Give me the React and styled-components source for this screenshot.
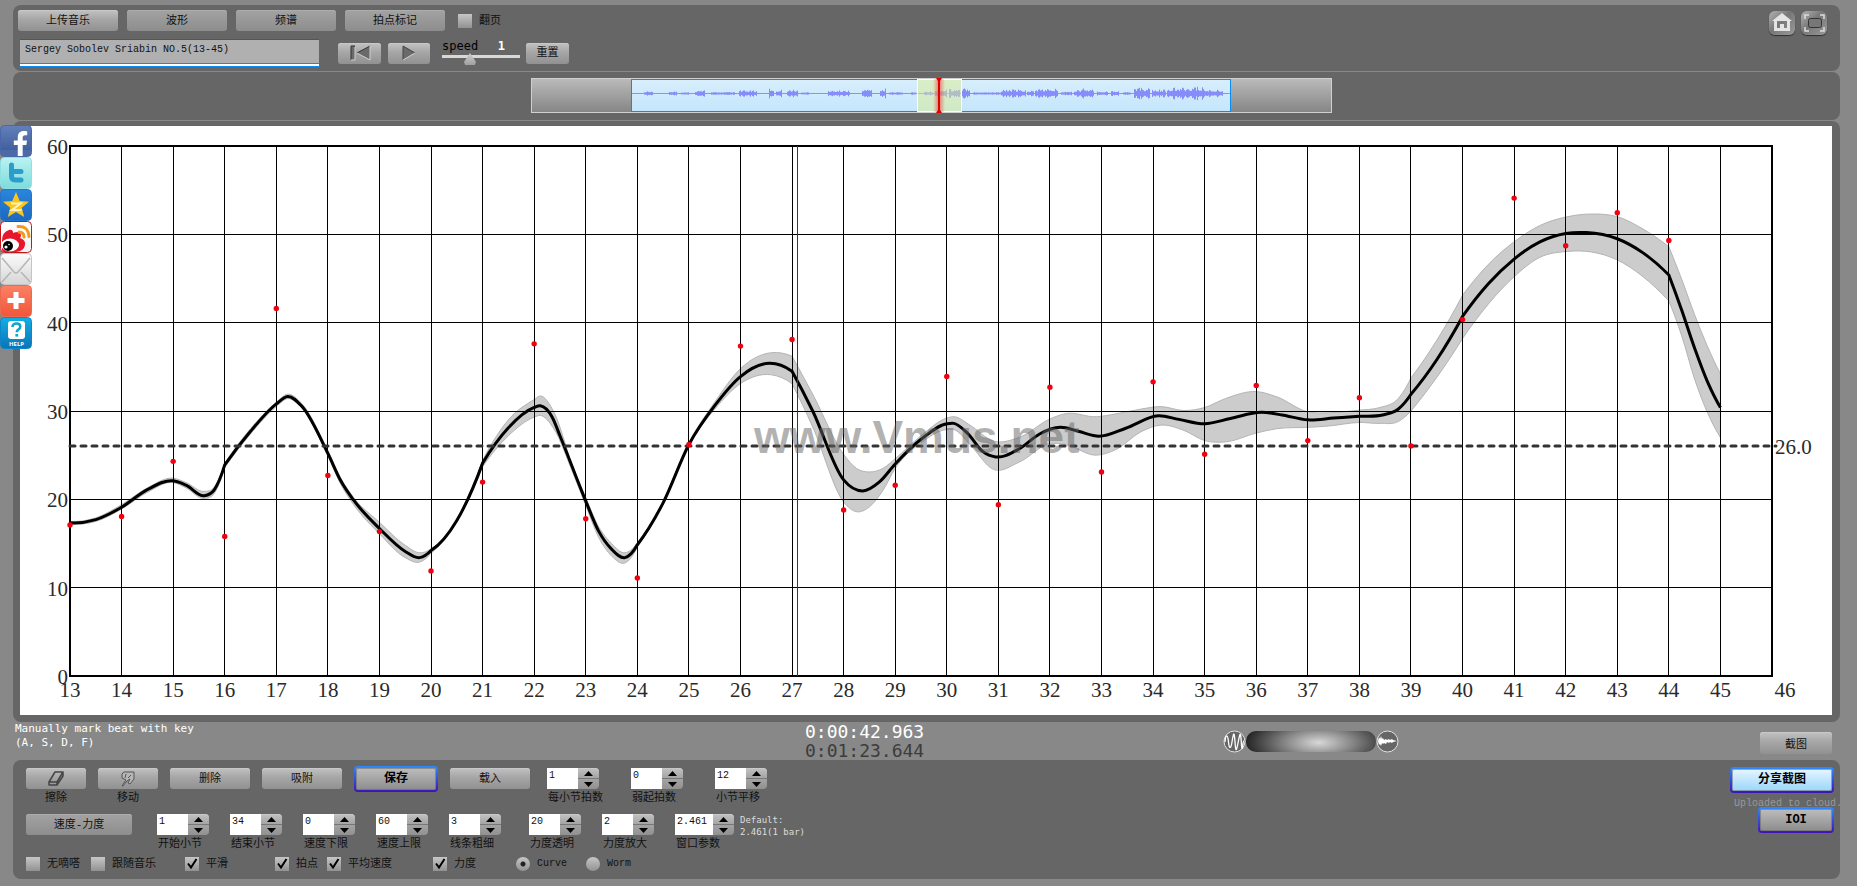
import * as React from "react"
import styled, { createGlobalStyle, css } from "styled-components"
import { FaFacebookF } from "react-icons/fa"

const GlobalStyle = createGlobalStyle`
  *, *::before, *::after {
    box-sizing: border-box;
  }
  body {
    margin: 0;
    background: #888;
    font-family: "Liberation Mono", "Noto Sans CJK SC", monospace;
    font-size: 11px;
    line-height: 14px;
    color: #111;
  }
  button, input {
    font: inherit;
    color: inherit;
    margin: 0;
  }
`

const raised = css`
  border: 0;
  border-radius: 3px;
  background: linear-gradient(#c2c2c2, #a6a6a6 45%, #919191);
  box-shadow: inset 0 1px 0 #c8c8c8;
`

const Page = styled.main`
  min-height: 100vh;
  padding: 5px 17px 7px 13px;
`
const Panel = styled.section`
  background: #666;
  border-radius: 8px;
  margin-bottom: 1px;
`
const TopPanel = styled(Panel)`
  display: flex;
  justify-content: space-between;
  padding: 5px 13px 4px 5px;
`
const WavePanel = styled(Panel)`
  display: flex;
  justify-content: center;
  padding: 6px 0 6px 10px;
  svg {
    display: block;
    width: 100%;
    max-width: 801px;
    height: 36px;
  }
`
const ChartPanel = styled(Panel)`
  padding: 5px 8px 7px 7px;
  margin-bottom: 0;
  svg {
    display: block;
    width: 100%;
    background: #fff;
  }
`
const Tabs = styled.div`
  display: flex;
  align-items: center;
  gap: 9px;
`
const Transport = styled.div`
  display: flex;
  align-items: center;
  margin: 8px 0 0 2px;
`
const Button = styled.button`
  ${raised}
  flex: none;
  width: ${(p) => p.$w}px;
  height: ${(p) => p.$h || 21}px;
  padding: 0;
  display: flex;
  align-items: center;
  justify-content: center;
  ${(p) => p.$flat && css`
    background: linear-gradient(#a3a3a3, #8d8d8d);
    box-shadow: inset 0 1px 0 #adadad;
  `}
`
const Framed = styled(Button)`
  height: 26px;
  border: 2px solid transparent;
  border-radius: 4px;
  font-weight: bold;
  color: #000;
  font-size: 12px;
  background:
    linear-gradient(${(p) => (p.$blue ? "#e6f6ff, #9ad6fb" : "#bdbdbd, #8c8c8c")}) padding-box,
    linear-gradient(#2d8bff, #3f12b8) border-box;
  box-shadow: inset 0 0 0 1px #6668;
`
const FileName = styled.input`
  width: 299px;
  height: 28px;
  margin-right: 19px;
  padding: 0 5px 8px;
  border: 0;
  border-top: 1px solid #555;
  font-size: 10px;
  background: linear-gradient(#0a8cf0 1px, #fff 1px, #fff 3px, #0a8cf0 3px) bottom / 100% 4px no-repeat #b0b0b0;
`
const Player = styled.div`
  display: flex;
  gap: 7px;
`
const Speed = styled.div`
  width: 78px;
  margin: 0 6px 0 12px;
  padding-bottom: 2px;
  font-family: "DejaVu Sans Mono", monospace;
  font-size: 12px;
  .head {
    display: flex;
    justify-content: space-between;
    padding-right: 15px;
    color: #000;
  }
  output {
    color: #fff;
    font-weight: bold;
  }
  input {
    appearance: none;
    display: block;
    width: 100%;
    height: 12px;
    background: linear-gradient(#d8d8d8, #d8d8d8) 0 2px / 100% 3px no-repeat;
  }
  input::-webkit-slider-thumb {
    appearance: none;
    width: 12px;
    height: 12px;
    background: linear-gradient(#d0d0d0, #a0a0a0);
    clip-path: polygon(50% 0, 100% 75%, 90% 100%, 10% 100%, 0 75%);
  }
`
const Corner = styled.div`
  display: flex;
  gap: 6px;
  padding-top: 1px;
  button {
    width: 26px;
    height: 24px;
    padding: 0;
    border: 0;
    border-radius: 6px;
    background: linear-gradient(135deg, #b4b4b4, #777 45%, #9a9a9a);
    box-shadow: 0 1px 1px #2a3030;
  }
  svg {
    display: block;
  }
`
const CheckLabel = styled.label`
  display: flex;
  align-items: center;
  gap: 7px;
  white-space: nowrap;
  font-size: ${(p) => (p.$latin ? 10 : 11)}px;
  input {
    appearance: none;
    flex: none;
    width: 14px;
    height: 14px;
    background: linear-gradient(#c6c6c6, #929292);
  }
  input[type="radio"] {
    border-radius: 50%;
  }
  input[type="radio"]:checked {
    background: radial-gradient(circle, #222 2px, transparent 3px), linear-gradient(#c6c6c6, #929292);
  }
  .box {
    position: relative;
    display: flex;
  }
  .box svg {
    position: absolute;
    left: 0;
    top: 0;
    pointer-events: none;
  }
`
const Status = styled.section`
  display: grid;
  grid-template-columns: 792fr 418fr 537fr 72px;
  align-items: center;
  height: 38px;
  padding-right: 8px;
  font-family: "DejaVu Sans Mono", monospace;
  color: #fff;
  p {
    margin: 0;
    padding: 0 0 10px 2px;
    align-self: start;
  }
`
const Clock = styled.div`
  font-size: 18px;
  line-height: 19px;
  color: ${(p) => p.$color};
`
const Wheel = styled.div`
  display: flex;
  align-items: center;
  input {
    appearance: none;
    width: 130px;
    height: 21px;
    border-radius: 10px;
    background: radial-gradient(ellipse 74px 28px at 56% 55%, #d8d8d8, #888 45%, #222);
  }
  input::-webkit-slider-thumb {
    appearance: none;
    width: 1px;
    height: 1px;
  }
`
const Snap = styled(Button)`
  margin-top: 4px;
  color: #111;
  font-family: "Noto Sans CJK SC", sans-serif;
`
const Controls = styled(Panel)`
  display: flex;
  justify-content: space-between;
  height: 119px;
  margin: 0;
  padding: 8px 6px 0 13px;
`
const Rows = styled.div`
  display: grid;
  grid-template-rows: 46px 43px 14px;
`
const Row = styled.div`
  display: flex;
  align-items: flex-start;
  gap: 12px;
  ${Framed} {
    margin-top: -2px;
  }
`
const Fields = styled.div`
  display: flex;
  gap: ${(p) => p.$gap}px;
  margin-left: ${(p) => p.$left}px;
`
const Cell = styled.div`
  width: ${(p) => p.$w}px;
  text-align: ${(p) => p.$align || "left"};
  white-space: nowrap;
  .caption {
    display: block;
    margin-top: 2px;
    padding-left: ${(p) => (p.$align ? 0 : 1)}px;
  }
`
const Spinner = styled.div`
  display: flex;
  height: 21px;
  input {
    flex: 1;
    min-width: 0;
    border: 0;
    padding: 0 0 5px 2px;
    background: #fff;
    font-size: 10px;
  }
  .arrows {
    ${raised}
    width: 21px;
    border-radius: 0 4px 4px 0;
    display: flex;
    flex-direction: column;
  }
  button {
    flex: 1;
    border: 0;
    padding: 0;
    background: none;
    display: flex;
    align-items: center;
    justify-content: center;
  }
  button + button {
    border-top: 1px solid #777;
  }
`
const Default = styled.p`
  margin: 0 0 0 -6px;
  font: 9px/12px "DejaVu Sans Mono", monospace;
  color: #ddd;
`
const Checks = styled.div`
  display: grid;
  grid-template-columns: 65px 94px 90px 52px 106px 83px 70px auto;
`
const Side = styled.div`
  display: flex;
  flex-direction: column;
  align-items: flex-end;
  margin-top: -1px;
  span {
    width: 100px;
    height: 14px;
    margin-top: 4px;
    font-size: 10px;
    color: #999;
    white-space: nowrap;
  }
  ${Framed} + span + ${Framed} {
    margin-top: -4px;
    z-index: 1;
  }
`
const Social = styled.nav`
  position: absolute;
  left: 0;
  top: 125px;
  width: 32px;
  a {
    display: block;
    height: 32px;
  }
  svg {
    display: block;
  }
`

// [beat, tempo]
const CURVE = [
  [13, 17.34], [13.5, 17.7], [14, 19.1], [14.5, 21.1], [15, 22.1], [15.25, 21.6], [15.6, 20.4], [15.8, 21.1],
  [16, 23.9], [16.5, 27.7], [17, 30.8], [17.22, 31.65], [17.5, 30.5], [18, 25.2], [18.25, 22.1], [18.5, 19.9],
  [19, 16.7], [19.5, 14.1], [19.78, 13.4], [20, 14.2], [20.5, 17.6], [21, 24.1], [21.5, 28.1], [22, 30.4],
  [22.12, 30.6], [22.35, 29.3], [22.5, 27.2], [23, 19.8], [23.25, 16.4], [23.5, 14.36], [23.76, 13.4],
  [24, 14.85], [24.5, 19.6], [25, 26.2], [25.5, 30.6], [26, 33.9], [26.57, 35.4], [27, 34.5], [27.4, 30],
  [28, 22.2], [28.37, 20.95], [28.7, 22], [29, 24], [29.5, 26.8], [30, 28.55], [30.14, 28.6], [30.4, 27.5],
  [30.7, 25.4], [30.95, 24.8], [31.4, 25.7], [31.8, 27.4], [32.2, 28.15], [32.55, 27.7], [32.95, 27.15],
  [33.47, 28.05], [34.1, 29.45], [34.5, 29.05], [35, 28.55], [35.5, 29.15], [36.1, 29.85], [36.5, 29.55],
  [37, 29], [37.5, 29.2], [38, 29.4], [38.45, 29.55], [38.75, 30.2], [39, 31.9], [39.5, 35.8], [40, 40.7],
  [40.5, 44.4], [41, 47.2], [41.5, 49.15], [42, 50.1], [42.4, 50.2], [43, 49.5], [43.5, 47.9], [44, 45.4],
  [44.25, 41.4], [44.5, 37.1], [44.75, 33.3], [45, 30.4],
]

// [beat, high, low]
const BAND = [
  [13, 17.5, 17.2], [13.5, 17.9, 17.5], [14, 19.4, 18.9], [14.5, 21.3, 20.8], [15, 22.4, 21.9], [15.25, 21.9, 21.3],
  [15.6, 20.9, 20.1], [15.8, 21.4, 20.7], [16, 24.1, 23.6], [16.5, 28, 27.4], [17, 31, 30.5], [17.22, 31.9, 31.4],
  [17.5, 30.8, 30.3], [18, 25.5, 24.9], [18.25, 22.4, 21.7], [18.5, 20.2, 19.4], [19, 17.4, 16.1], [19.5, 14.8, 13.4],
  [19.78, 13.95, 12.9], [20, 14.4, 13.9], [20.5, 17.7, 17.5], [21, 24.4, 23.7], [21.5, 29, 27.2], [22, 31.3, 29.3],
  [22.12, 31.7, 29.5], [22.38, 29.9, 28], [22.75, 23.7, 23], [23, 20.2, 19.3], [23.25, 16.9, 15.7], [23.5, 15, 13.6],
  [23.76, 13.95, 12.8], [24, 15.1, 14.6], [24.5, 19.7, 19.5], [25, 26.4, 26.1], [25.5, 31, 30.2],
  [26, 34.8, 33.1], [26.6, 36.6, 34.1], [27, 36.2, 33.1], [27.4, 31.9, 28.2], [28, 25.1, 19.7],
  [28.25, 23.5, 18.6], [28.5, 23.1, 19.15], [28.76, 23.5, 21], [29, 24.6, 23.5], [29.5, 27.2, 26.4],
  [30, 29.2, 27.9], [30.14, 29.35, 27.9], [30.45, 28.4, 26.2], [30.9, 26.6, 23.4], [31.4, 27, 24.2],
  [32, 29.1, 26.3], [32.3, 29.7, 26.2], [32.9, 29.35, 25], [33.3, 29.7, 25.7], [33.75, 30.2, 27.6],
  [34.15, 30.5, 28.4], [34.6, 30.05, 27.8], [35, 30.4, 26.65], [35.4, 31.4, 26.5],
  [36, 32.2, 27.5], [36.4, 31.6, 28], [37, 29.9, 28.15], [37.4, 29.8, 28.3],
  [38, 30.1, 28.7], [38.4, 30.4, 28.6], [38.75, 31.4, 28.8], [39, 33.75, 30], [39.5, 38, 33.8], [40, 43.1, 38.2],
  [40.5, 46.6, 42.1], [41, 49.15, 45.2], [41.5, 51, 47.4], [42, 51.95, 48.05], [42.5, 52.3, 48], [43, 52, 47.1],
  [43.5, 50.6, 45.2], [44, 48.6, 42.45], [44.25, 44.9, 38.5], [44.5, 40.9, 33.6], [44.75, 37.3, 29.8], [45, 34.2, 27],
]

// beats at which the direction changes abruptly
const CORNERS = [16, 20, 21, 24, 27, 39, 40, 44]

// measured tempo of each beat, from 13 on
const BEATS = [
  17.1, 18.05, 24.3, 15.8, 41.6, 22.7, 16.35, 11.9, 21.95, 37.6, 17.8, 11.1, 26.2, 37.35, 38.1, 18.8,
  21.6, 33.9, 19.4, 32.7, 23.1, 33.3, 25.1, 32.9, 26.65, 31.5, 26.05, 40.35, 54.1, 48.7, 52.45, 49.3,
]

const LEFT = 50
const RIGHT = 1752
const TOP = 20
const BOTTOM = 550
const bx = (beat) => LEFT + ((beat - 13) * (RIGHT - LEFT)) / 33
const ty = (tempo) => BOTTOM - (tempo * (BOTTOM - TOP)) / 60

// each tangent is the slope of the parabola through a point and its neighbours
const smooth = (points) => {
  const p = points.map(([b, t]) => [bx(b), ty(t)])
  const last = p.length - 1
  const slope = (i) => (p[i + 1][1] - p[i][1]) / (p[i + 1][0] - p[i][0])
  const isEnd = (i) => i === 0 || i === last || CORNERS.includes(points[i][0])
  const inner = (i) => {
    const h0 = p[i][0] - p[i - 1][0]
    const h1 = p[i + 1][0] - p[i][0]
    return (slope(i - 1) * h1 + slope(i) * h0) / (h0 + h1)
  }
  return p.slice(1).map((end, i) => {
    const s = slope(i)
    let m0 = isEnd(i) ? null : inner(i)
    let m1 = isEnd(i + 1) ? null : inner(i + 1)
    if (m0 === null) m0 = m1 === null ? s : 2 * s - m1
    if (m1 === null) m1 = 2 * s - m0
    const h = (end[0] - p[i][0]) / 3
    return `C${p[i][0] + h} ${p[i][1] + h * m0} ${end[0] - h} ${end[1] - h * m1} ${end[0]} ${end[1]}`
  }).join("")
}
const start = ([b, t]) => `${bx(b)} ${ty(t)}`

const high = BAND.map(([b, h]) => [b, h])
const lowBack = BAND.map(([b, , l]) => [b, l]).reverse()

const beats = Array.from({ length: 34 }, (_, i) => 13 + i)
const tempos = [0, 10, 20, 30, 40, 50, 60]

const TempoChart = () => (
  <svg viewBox="0 0 1812 589" role="img" aria-label="Tempo curve">
    <path d={`M${start(high[0])}${smooth(high)}L${start(lowBack[0])}${smooth(lowBack)}Z`} fill="#ccc" stroke="#b4b4b4" />
    <g stroke="#000" strokeWidth="1" shapeRendering="crispEdges">
      {beats.map((b) => <line key={b} x1={bx(b)} x2={bx(b)} y1={TOP} y2={BOTTOM} />)}
      {tempos.map((t) => <line key={t} x1={LEFT} x2={RIGHT} y1={ty(t)} y2={ty(t)} />)}
      <rect x={LEFT} y={TOP} width={RIGHT - LEFT} height={BOTTOM - TOP} fill="none" strokeWidth="2" />
    </g>
    <path d={`M${start(CURVE[0])}${smooth(CURVE)}`} fill="none" stroke="#000" strokeWidth="3" />
    <line x1={LEFT} x2={RIGHT + 4} y1="320" y2="320" stroke="#333" strokeWidth="3" strokeDasharray="5 6" strokeLinecap="round" />
    <line x1="777.5" x2="777.5" y1={TOP} y2={BOTTOM} stroke="#c00000" strokeWidth="1" shapeRendering="crispEdges" />
    {BEATS.map((t, i) => <circle key={i} cx={bx(13 + i)} cy={ty(t)} r="2.7" fill="#f00010" />)}
    <text x="734" y="327" fontFamily="Liberation Sans, sans-serif" fontWeight="bold" fontSize="46" fill="#666" fillOpacity="0.5">www.Vmus.net</text>
    <g fontFamily="Liberation Serif, serif" fontSize="21" fill="#2a2a2a">
      {tempos.map((t) => <text key={t} x="48" y={ty(t) + 8} textAnchor="end">{t}</text>)}
      {beats.map((b) => <text key={b} x={bx(b) + (b === 46 ? 13 : 0)} y="571" textAnchor="middle">{b}</text>)}
      <text x="1755" y="328">26.0</text>
    </g>
  </svg>
)

// [from, to, amplitude]
const BURSTS = [
  [13, 22, 2], [38, 46, 2], [50, 58, 1], [64, 74, 3], [80, 104, 1], [108, 126, 3], [138, 143, 6], [145, 151, 4],
  [156, 167, 4], [170, 178, 1], [197, 219, 3], [231, 241, 5], [249, 255, 5], [258, 272, 1], [280, 285, 1],
  [293, 302, 2], [304, 316, 4], [318, 329, 5], [330, 339, 6], [342, 370, 1], [370, 395, 4], [396, 403, 3],
  [404, 427, 5], [430, 441, 2], [443, 451, 4], [451, 455, 7], [455, 463, 4], [466, 477, 2], [480, 488, 3],
  [492, 500, 1], [503, 519, 6], [521, 535, 4], [536, 556, 6], [556, 573, 7], [573, 592, 4],
]
const waveBars = BURSTS.flatMap(([from, to, amp]) =>
  Array.from({ length: to - from }, (_, i) => {
    const x = from + i
    const rnd = Math.abs(Math.sin(x * 12.9898) * 43758.5453) % 1
    return { x: 100 + x, a: 0.5 + amp * (0.3 + 0.6 * rnd * rnd) }
  })
)

const Overview = () => (
  <svg viewBox="0 0 801 36" role="img" aria-label="Waveform">
    <defs>
      <linearGradient id="track" x2="0" y2="1">
        <stop offset="0" stopColor="#bbb" />
        <stop offset="1" stopColor="#858585" />
      </linearGradient>
      <linearGradient id="sky" x2="0" y2="1">
        <stop offset="0" stopColor="#d8eefc" />
        <stop offset="1" stopColor="#c4e6fc" />
      </linearGradient>
      <linearGradient id="glow">
        <stop offset="0" stopColor="#e33" stopOpacity="0" />
        <stop offset="0.5" stopColor="#e33" stopOpacity="0.6" />
        <stop offset="1" stopColor="#e33" stopOpacity="0" />
      </linearGradient>
    </defs>
    <rect x="0.5" y="0.5" width="800" height="34" fill="url(#track)" stroke="#d0d0d0" />
    <rect x="100.5" y="1.5" width="599" height="32" fill="url(#sky)" stroke="#0a8cf0" />
    <rect x="101" y="15" width="598" height="1" fill="#8a90ff" />
    {waveBars.map(({ x, a }) => <rect key={x} x={x} y={15.5 - a} width="1" height={2 * a} fill="#868cfa" />)}
    <rect x="386.5" y="1.5" width="44" height="32" fill="#dcee90" fillOpacity="0.5" stroke="#fff" />
    <rect x="402" y="1" width="12" height="33" fill="url(#glow)" />
    <path d="M405 0h6l-2 3v29l2 3h-6l2-3V3z" fill="#e00000" />
  </svg>
)

const Arrow = ({ up }) => (
  <svg width="9" height="5" viewBox="0 0 9 5" aria-hidden="true">
    <path d={up ? "M4.500 0L9 5H0z" : "M0 0h9L4.500 5z"} fill="#000" />
  </svg>
)

const NumberField = ({ id, label, value, w = 52 }) => {
  const [val, setVal] = React.useState(value)
  const step = (n) => setVal(String(Number(val) + n))
  return (
    <Cell $w={w}>
      <Spinner>
        <input id={id} value={val} onChange={(e) => setVal(e.target.value)} />
        <div className="arrows">
          <button aria-label={`${label} +`} onClick={() => step(1)}><Arrow up /></button>
          <button aria-label={`${label} -`} onClick={() => step(-1)}><Arrow /></button>
        </div>
      </Spinner>
      <label className="caption" htmlFor={id}>{label}</label>
    </Cell>
  )
}

const Check = ({ label, checked }) => {
  const [on, setOn] = React.useState(!!checked)
  return (
    <CheckLabel>
      <span className="box">
        <input type="checkbox" checked={on} onChange={() => setOn(!on)} />
        {on && (
          <svg width="14" height="14" viewBox="0 0 14 14">
            <path d="M3 6.500l3 4 5.500-8.500" fill="none" stroke="#000" strokeWidth="2" />
          </svg>
        )}
      </span>
      {label}
    </CheckLabel>
  )
}

const Badge = ({ id, from, to, edge, children }) => (
  <svg width="32" height="32" viewBox="0 0 32 32">
    <defs>
      <linearGradient id={id} x2="0" y2="1">
        <stop offset="0" stopColor={from} />
        <stop offset="1" stopColor={to} />
      </linearGradient>
    </defs>
    <rect x="0.5" y="0.5" width="31" height="31" rx="4" fill={`url(#${id})`} stroke={edge} />
    {children}
  </svg>
)

const SocialBar = () => (
  <Social>
    <a href="#facebook" aria-label="Facebook">
      <Badge id="fb" from="#6380bb" to="#3a5694" edge="#4a68a8">
        <path d="M1 25h30v4q0 2-2 2H3q-2 0-2-2z" fill="#4c6aa8" />
        <FaFacebookF size={25} x="8" y="6" color="#fff" />
      </Badge>
    </a>
    <a href="#twitter" aria-label="Twitter">
      <Badge id="tw" from="#b9f3f1" to="#7cdcdc" edge="#8fdfe4">
        <path d="M11.500 8v11q0 4 4 4H21M11.500 14.500H21" fill="none" stroke="#2b9ccb" strokeWidth="5" strokeLinecap="round" strokeLinejoin="round" />
      </Badge>
    </a>
    <a href="#qzone" aria-label="Qzone">
      <Badge id="qz" from="#2a86dc" to="#1d68c0" edge="#2374cc">
        <path d="M16 3l3.700 9 9.300.7-7.200 6 2.400 9.300-8.200-5-8.200 5 2.400-9.300-7.200-6 9.300-.7z" fill="#fdc51c" />
        <path d="M11 14.500h9.500L12 21h9.500" fill="none" stroke="#fff3c0" strokeWidth="2" />
      </Badge>
    </a>
    <a href="#weibo" aria-label="Weibo">
      <Badge id="wb" from="#fff" to="#f1f1f1" edge="#c5161d">
        <path d="M2 20q0-9 7-11 4-1 4 3 7-3 8 2 0 2-1 3 6 2 5 7-1 6-9 7H4q-2 0-2-3z" fill="#e6162d" />
        <ellipse cx="10" cy="24" rx="9" ry="6.500" fill="#fff" />
        <circle cx="8" cy="25" r="5" fill="#000" />
        <circle cx="6" cy="26" r="1.600" fill="#fff" />
        <circle cx="9" cy="23.500" r="0.800" fill="#fff" />
        <path d="M18 5.500q10-1 11 10M19 11q5 0 5 5" fill="none" stroke="#f39a1c" strokeWidth="3" strokeLinecap="round" />
      </Badge>
    </a>
    <a href="#mail" aria-label="Mail">
      <Badge id="ml" from="#fbfbfb" to="#d6d6d6" edge="#c4c4c4">
        <path d="M2 5l12 14q2 2 4 0L30 5M2 29l9-10M30 29l-9-10" fill="none" stroke="#b5b5b5" strokeWidth="1.500" />
      </Badge>
    </a>
    <a href="#share" aria-label="Share">
      <Badge id="sh" from="#fb8263" to="#f2553a" edge="#ee6a4e">
        <path d="M16 7v17M7.500 15.500h17" stroke="#fff" strokeWidth="5" />
      </Badge>
    </a>
    <a href="#help" aria-label="Help">
      <Badge id="hp" from="#12aee6" to="#0a74b8" edge="#0c86c8">
        <rect x="8" y="4" width="17" height="18" rx="3" fill="#fff" />
        <path d="M12.500 10q0-3.500 4-3.500 3.800 0 3.800 3 0 2-2 3.200-1.500 1-1.500 2.500" fill="none" stroke="#12a5c8" strokeWidth="2.600" />
        <rect x="15.400" y="17" width="2.800" height="2.600" fill="#12a5c8" />
        <text x="16.500" y="29" textAnchor="middle" fontFamily="Open Sans, sans-serif" fontWeight="bold" fontSize="6" fill="#fff">HELP</text>
      </Badge>
    </a>
  </Social>
)

const App = () => {
  const [speed, setSpeed] = React.useState(1)
  const [mode, setMode] = React.useState("Curve")

  return (
    <Page>
      <GlobalStyle />

      <TopPanel>
        <div>
          <Tabs>
            <Button $w={100}>上传音乐</Button>
            <Button $w={100} $flat>波形</Button>
            <Button $w={100} $flat>频谱</Button>
            <Button $w={100} $flat>拍点标记</Button>
            <Fields $left={4}><Check label="翻页" /></Fields>
          </Tabs>
          <Transport>
            <FileName aria-label="File" defaultValue="Sergey Sobolev Sriabin NO.5(13-45)" />
            <Player>
              <Button $w={43} aria-label="Rewind">
                <svg width="22" height="16" viewBox="0 0 22 16">
                  <path d="M2 1h4v14H2zM21 1v14L8 8z" fill="#6a6a6a" />
                  <path d="M2 15V1h4M21 1L8 8" fill="none" stroke="#333" />
                  <path d="M6 2v13H2M21 1v14L8 8" fill="none" stroke="#d0d0d0" />
                </svg>
              </Button>
              <Button $w={42} aria-label="Play">
                <svg width="14" height="16" viewBox="0 0 14 16">
                  <path d="M1 1v14l12-7z" fill="#6a6a6a" />
                  <path d="M1 15V1l12 7" fill="none" stroke="#444" />
                  <path d="M1 15l12-7" stroke="#d0d0d0" />
                </svg>
              </Button>
            </Player>
            <Speed>
              <div className="head">
                <label htmlFor="speed">speed</label>
                <output htmlFor="speed">{speed}</output>
              </div>
              <input id="speed" type="range" min="0" max="3" value={speed} onChange={(e) => setSpeed(e.target.value)} />
            </Speed>
            <Button $w={43}>重置</Button>
          </Transport>
        </div>
        <Corner>
          <button aria-label="Home">
            <svg width="26" height="24" viewBox="0 0 26 24">
              <path d="M13 2l10 8h-2v10H5V10H3zM8 10v7h3v-4h4v4h3v-7z" fill="#e4e4e4" fillRule="evenodd" />
            </svg>
          </button>
          <button aria-label="Full screen">
            <svg width="26" height="24" viewBox="0 0 26 24">
              <rect x="7.500" y="7.500" width="13" height="9" rx="2" fill="#777" stroke="#333" />
              <path d="M4 8V4h4M19 4h4v4M4 16v4h4M23 16v4h-4" fill="none" stroke="#ddd" strokeWidth="1.500" />
            </svg>
          </button>
        </Corner>
      </TopPanel>

      <WavePanel><Overview /></WavePanel>
      <ChartPanel><TempoChart /></ChartPanel>

      <Status>
        <p>Manually mark beat with key<br />(A, S, D, F)</p>
        <div>
          <Clock $color="#fff">0:00:42.963</Clock>
          <Clock $color="#3c3c3c">0:01:23.644</Clock>
        </div>
        <Wheel>
          <svg width="23" height="23" viewBox="0 0 23 23">
            <circle cx="11.500" cy="11.500" r="10.500" fill="#666" stroke="#e0e0e0" />
            <path d="M2 12q.500-6 1.700-6t1.800 6 1.700 5.500T9 12t1.500-7.500T12 12t1.600 7 1.600-7 1.600-7 1.500 7 1.300 4.500T21 11" fill="none" stroke="#fff" strokeWidth="1.300" />
          </svg>
          <input type="range" aria-label="Zoom" />
          <svg width="23" height="23" viewBox="0 0 23 23">
            <circle cx="11.500" cy="11.500" r="10.500" fill="#666" stroke="#e0e0e0" />
            <path d="M2 11l1-4 1 2 1-3 1 3 1-1 1 2 2-1 1 1 2-1 1 1 2-1 1 1 4 1-4 1-1 1-2-1-1 1-2-1-1 2-2-1-1 1-1-1-1 3-1-2-1 1z" fill="#fff" />
          </svg>
        </Wheel>
        <Snap $w={72} $h={22}>截图</Snap>
      </Status>

      <Controls>
        <Rows>
          <Row>
            <Cell $w={60} $align="center">
              <Button $w={60} aria-labelledby="erase">
                <svg width="18" height="16" viewBox="0 0 18 16">
                  <path d="M8 1h8L10 11H2zM2 11v3h8l6-9V1M10 11v3" fill="none" stroke="#444" strokeWidth="1.500" strokeLinejoin="round" />
                </svg>
              </Button>
              <span className="caption" id="erase">擦除</span>
            </Cell>
            <Cell $w={60} $align="center">
              <Button $w={60} aria-labelledby="move">
                <svg width="18" height="18" viewBox="0 0 18 18">
                  <path d="M3 16l4-6-4-2V4q1-3 5-2h7v7l-4 5-2-1 2-4-3 2-4 5zM6 8l1-4M9 8l3-3" fill="#b5b5b5" stroke="#555" strokeLinejoin="round" />
                </svg>
              </Button>
              <span className="caption" id="move">移动</span>
            </Cell>
            <Button $w={80}>删除</Button>
            <Button $w={80}>吸附</Button>
            <Framed $w={84}>保存</Framed>
            <Button $w={80}>载入</Button>
            <Fields $gap={32} $left={5}>
              <NumberField id="beats" label="每小节拍数" value="1" />
              <NumberField id="upbeat" label="弱起拍数" value="0" />
              <NumberField id="shift" label="小节平移" value="12" />
            </Fields>
          </Row>
          <Row>
            <Button $w={106} $flat>速度-力度</Button>
            <Fields $gap={21} $left={13}>
              <NumberField id="first" label="开始小节" value="1" />
              <NumberField id="last" label="结束小节" value="34" />
              <NumberField id="min" label="速度下限" value="0" />
              <NumberField id="max" label="速度上限" value="60" />
              <NumberField id="line" label="线条粗细" value="3" />
            </Fields>
            <Fields $gap={21} $left={16}>
              <NumberField id="alpha" label="力度透明" value="20" />
              <NumberField id="gain" label="力度放大" value="2" />
              <NumberField id="window" label="窗口参数" value="2.461" w={59} />
            </Fields>
            <Default>Default:<br />2.461(1 bar)</Default>
          </Row>
          <Checks>
            <Check label="无嘀嗒" />
            <Check label="跟随音乐" />
            <Check label="平滑" checked />
            <Check label="拍点" checked />
            <Check label="平均速度" checked />
            <Check label="力度" checked />
            {["Curve", "Worm"].map((m) => (
              <CheckLabel key={m} $latin>
                <input type="radio" name="mode" checked={mode === m} onChange={() => setMode(m)} />
                {m}
              </CheckLabel>
            ))}
          </Checks>
        </Rows>
        <Side>
          <Framed $w={104} $blue>分享截图</Framed>
          <span>Uploaded to cloud.</span>
          <Framed $w={76}>IOI</Framed>
        </Side>
      </Controls>

      <SocialBar />
    </Page>
  )
}

export default App
